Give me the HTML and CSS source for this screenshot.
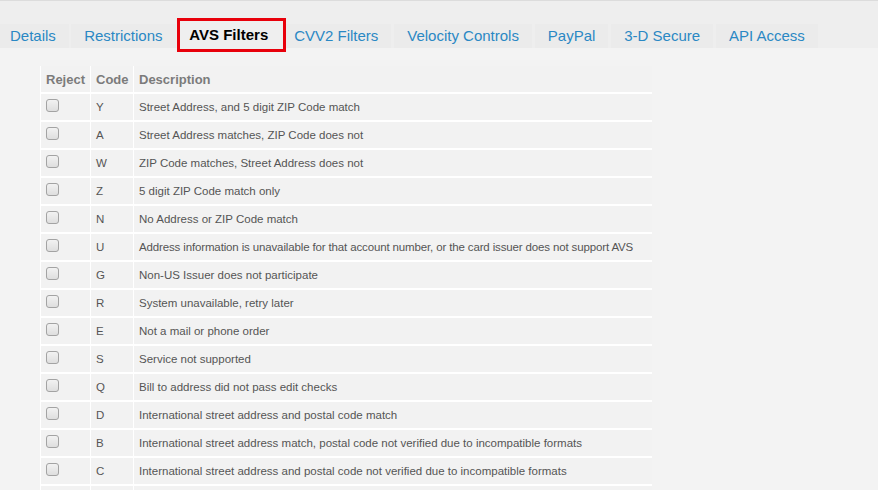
FILE: index.html
```html
<!DOCTYPE html>
<html>
<head>
<meta charset="utf-8">
<link rel="stylesheet" href="styles.css">
</head>
<body>
<nav class="tabbar">
  <a class="tab">Details</a>
  <a class="tab">Restrictions</a>
  <a class="tab active">AVS Filters</a>
  <a class="tab">CVV2 Filters</a>
  <a class="tab">Velocity Controls</a>
  <a class="tab">PayPal</a>
  <a class="tab">3-D Secure</a>
  <a class="tab">API Access</a>
</nav>
<main class="content">
  <table class="avs">
    <thead>
      <tr><th class="c-rej">Reject</th><th class="c-code">Code</th><th class="c-desc">Description</th></tr>
    </thead>
    <tbody>
      <tr><td><input type="checkbox" class="cb"></td><td>Y</td><td>Street Address, and 5 digit ZIP Code match</td></tr>
      <tr><td><input type="checkbox" class="cb"></td><td>A</td><td>Street Address matches, ZIP Code does not</td></tr>
      <tr><td><input type="checkbox" class="cb"></td><td>W</td><td>ZIP Code matches, Street Address does not</td></tr>
      <tr><td><input type="checkbox" class="cb"></td><td>Z</td><td>5 digit ZIP Code match only</td></tr>
      <tr><td><input type="checkbox" class="cb"></td><td>N</td><td>No Address or ZIP Code match</td></tr>
      <tr><td><input type="checkbox" class="cb"></td><td>U</td><td class="tight">Address information is unavailable for that account number, or the card issuer does not support AVS</td></tr>
      <tr><td><input type="checkbox" class="cb"></td><td>G</td><td>Non-US Issuer does not participate</td></tr>
      <tr><td><input type="checkbox" class="cb"></td><td>R</td><td>System unavailable, retry later</td></tr>
      <tr><td><input type="checkbox" class="cb"></td><td>E</td><td>Not a mail or phone order</td></tr>
      <tr><td><input type="checkbox" class="cb"></td><td>S</td><td>Service not supported</td></tr>
      <tr><td><input type="checkbox" class="cb"></td><td>Q</td><td>Bill to address did not pass edit checks</td></tr>
      <tr><td><input type="checkbox" class="cb"></td><td>D</td><td>International street address and postal code match</td></tr>
      <tr><td><input type="checkbox" class="cb"></td><td>B</td><td>International street address match, postal code not verified due to incompatible formats</td></tr>
      <tr><td><input type="checkbox" class="cb"></td><td>C</td><td>International street address and postal code not verified due to incompatible formats</td></tr>
      <tr><td><input type="checkbox" class="cb"></td><td>&nbsp;</td><td>&nbsp;</td></tr>
    </tbody>
  </table>
</main>
</body>
</html>
```

FILE: styles.css
```css
html {
  overflow: hidden;
}
body {
  margin: 0;
  background: #f3f3f3;
  font-family: "Liberation Sans", Arial, sans-serif;
}
.tabbar {
  display: flex;
  align-items: flex-start;
  gap: 2.3px;
  height: 24px;
  padding: 23px 0 0 0;
  margin: 0;
  background: #eeeeee;
  border-top: 1px solid #dcdcdc;
}
.tab {
  height: 24px;
  line-height: 24px;
  padding: 0 13px;
  font-size: 15px;
  color: #2a88c4;
  background: #ebebeb;
  white-space: nowrap;
}
.tab:first-child {
  margin-left: -3px;
}
.tab.active {
  box-sizing: border-box;
  height: 34px;
  margin-top: -6px;
  margin-bottom: -4px;
  line-height: 28px;
  padding: 0 15px 0 9px;
  border: 3px solid #e8000b;
  background: #efefef;
  color: #000;
  font-weight: bold;
  margin-left: -0.5px;
  margin-right: -8px;
  position: relative;
}
.tab.active ~ .tab {
  margin-left: 0.6px;
}
.content {
  padding: 18px 0 0 40px;
}
.avs {
  border-collapse: collapse;
  width: 612px;
  background: #f2f2f2;
  border-left: 1px solid #ffffff;
}
.avs th {
  height: 25px;
  padding: 1px 0 0 5px;
  text-align: left;
  font-size: 13px;
  font-weight: bold;
  color: #7b7b7b;
  vertical-align: middle;
}
.avs th + th,
.avs td + td {
  border-left: 1px solid #ffffff;
}
.c-rej { width: 44px; }
.c-code { width: 37px; }
.avs td {
  height: 25px;
  padding: 0 0 1px 5px;
  border-top: 2px solid #ffffff;
  font-size: 11.5px;
  color: #555555;
  vertical-align: middle;
  white-space: nowrap;
}
.avs td.tight {
  letter-spacing: -0.14px;
}
.cb {
  appearance: none;
  -webkit-appearance: none;
  display: block;
  width: 13px;
  height: 13px;
  margin: 0 0 3px 0;
  box-sizing: border-box;
  border: 1px solid #a3a3a3;
  border-radius: 3px;
  background: linear-gradient(#f2f2f2, #dedede);
}
```
